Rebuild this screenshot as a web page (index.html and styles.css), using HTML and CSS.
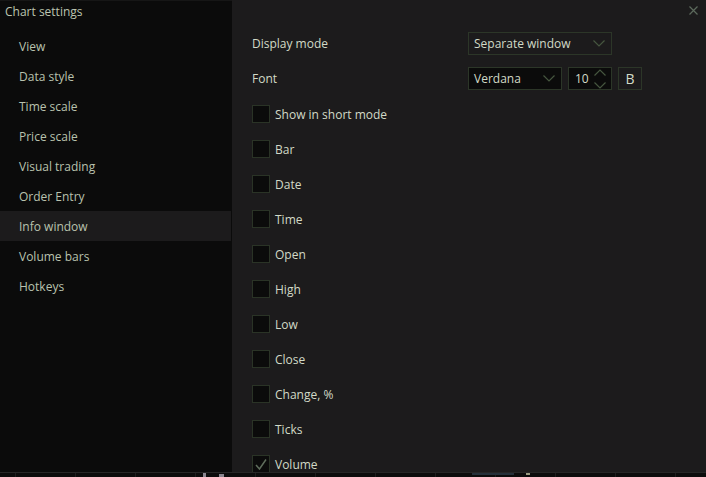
FILE: index.html
```html
<!DOCTYPE html>
<html>
<head>
<meta charset="utf-8">
<link rel="stylesheet" href="styles.css">
</head>
<body>
<div class="dialog">
  <aside class="sidebar">
    <div class="title">Chart settings</div>
    <ul class="nav">
      <li>View</li>
      <li>Data style</li>
      <li>Time scale</li>
      <li>Price scale</li>
      <li>Visual trading</li>
      <li>Order Entry</li>
      <li class="active">Info window</li>
      <li>Volume bars</li>
      <li>Hotkeys</li>
    </ul>
  </aside>
  <main class="panel">
    <button class="close" aria-label="Close">
      <svg width="9" height="9" viewBox="0 0 9 9"><path d="M0.5 0.5L8.5 8.5M8.5 0.5L0.5 8.5" stroke="#5c6a5c" stroke-width="1.2"/></svg>
    </button>
    <div class="field">
      <span class="label">Display mode</span>
      <div class="select wide">
        <span>Separate window</span>
        <svg class="chev" width="12" height="7" viewBox="0 0 12 7"><path d="M0.5 0.5L6 6L11.5 0.5" fill="none" stroke="#46563f" stroke-width="1.2"/></svg>
      </div>
    </div>
    <div class="field">
      <span class="label">Font</span>
      <div class="select dark font">
        <span>Verdana</span>
        <svg class="chev" width="12" height="7" viewBox="0 0 12 7"><path d="M0.5 0.5L6 6L11.5 0.5" fill="none" stroke="#46563f" stroke-width="1.2"/></svg>
      </div>
      <div class="spin">
        <span>10</span>
        <svg class="arrows" width="12" height="20" viewBox="0 0 12 20"><path d="M0.5 6.5L6 1L11.5 6.5M0.5 13.5L6 19L11.5 13.5" fill="none" stroke="#46563f" stroke-width="1.2"/></svg>
      </div>
      <div class="bold">B</div>
    </div>
    <ul class="checks">
      <li><span class="box"></span>Show in short mode</li>
      <li><span class="box"></span>Bar</li>
      <li><span class="box"></span>Date</li>
      <li><span class="box"></span>Time</li>
      <li><span class="box"></span>Open</li>
      <li><span class="box"></span>High</li>
      <li><span class="box"></span>Low</li>
      <li><span class="box"></span>Close</li>
      <li><span class="box"></span>Change, %</li>
      <li><span class="box"></span>Ticks</li>
      <li><span class="box checked"><svg width="12" height="11" viewBox="0 0 12 11"><path d="M1 6L4.5 10L11 0.5" fill="none" stroke="#5f6d5c" stroke-width="1.5"/></svg></span>Volume</li>
    </ul>
  </main>
</div>
<div class="chart-strip">
  <span class="grid"></span>
  <span class="bars"><i class="b1"></i><i class="b2"></i></span>
  <span class="blue"></span>
  <span class="mark"></span>
</div>
</body>
</html>
```
FILE: styles.css
```css
* { box-sizing: border-box; }
html, body { margin: 0; padding: 0; }
body {
  width: 706px;
  height: 477px;
  overflow: hidden;
  background: #0c0c0c;
  font-family: "Open Sans", "Noto Sans", sans-serif;
  font-size: 12px;
  display: flex;
  flex-direction: column;
}
.dialog {
  height: 472px;
  display: flex;
  overflow: hidden;
  flex: none;
}
.sidebar {
  width: 232px;
  flex: none;
  background: #0b0b0b;
  border-top: 1px solid #161616;
}
.title {
  height: 30px;
  padding: 2px 0 0 5px;
  color: #bcc5b0;
  font-size: 12px;
}
.nav {
  list-style: none;
  margin: 0;
  padding: 0;
}
.nav li {
  height: 30px;
  width: 231px;
  line-height: 31px;
  padding-left: 19px;
  color: #b9c2ae;
}
.nav li.active {
  background: #1c1b1c;
}
.panel {
  flex: 1;
  position: relative;
  background: #1c1b1c;
  padding: 31px 0 0 20px;
}
.close {
  position: absolute;
  top: 6px;
  right: 8px;
  width: 9px;
  height: 9px;
  padding: 0;
  border: 0;
  background: none;
  display: block;
}
.close svg { display: block; }
.field {
  display: flex;
  align-items: center;
  height: 23px;
  margin-bottom: 12px;
  color: #d2dac7;
}
.field:nth-child(2) { margin-top: 1px; }
.label {
  width: 216px;
  flex: none;
}
.select {
  height: 23px;
  border: 1px solid #2c3628;
  display: flex;
  align-items: center;
  justify-content: space-between;
  padding: 0 6px 0 5px;
  color: #d2dac7;
}
.select.wide { width: 144px; }
.select.font { width: 94px; background: #0b0b0b; }
.chev { display: block; }
.spin {
  width: 44px;
  height: 23px;
  margin-left: 6px;
  border: 1px solid #2c3628;
  background: #0b0b0b;
  display: flex;
  align-items: center;
  justify-content: space-between;
  padding: 0 5px 0 6px;
  color: #d2dac7;
}
.arrows { display: block; }
.bold {
  width: 24px;
  height: 23px;
  margin-left: 6px;
  border: 1px solid #2c3628;
  display: flex;
  align-items: center;
  justify-content: center;
  font-size: 14px;
  color: #d2dac7;
}
.checks {
  list-style: none;
  margin: 0;
  padding: 3px 0 0 0;
  display: flex;
  flex-direction: column;
  gap: 17px;
}
.checks li {
  display: flex;
  align-items: center;
  height: 18px;
  color: #d2dac7;
}
.box {
  width: 18px;
  height: 18px;
  margin-right: 5px;
  border: 1px solid #2a3326;
  background: #0b0b0b;
  display: flex;
  align-items: center;
  justify-content: center;
  flex: none;
}
.box svg { display: block; }
.chart-strip {
  position: relative;
  height: 5px;
  flex: none;
  border-top: 1px solid #262626;
  background: #0c0c0c;
}
.grid {
  position: absolute;
  inset: 0;
  background-image: repeating-linear-gradient(90deg, transparent 0 15px, #1e1e1e 15px 16px, transparent 16px 60px);
}
.bars { position: absolute; inset: 0; }
.bars i { position: absolute; bottom: 0; background: #8a8690; }
.bars .b1 { left: 203px; width: 3px; height: 4px; }
.bars .b2 { left: 219px; width: 5px; height: 3px; }
.blue {
  position: absolute;
  left: 472px;
  top: 0;
  width: 42px;
  height: 2px;
  background: #25303a;
}
.mark {
  position: absolute;
  left: 526px;
  top: 0;
  width: 4px;
  height: 2px;
  background: #9a9a80;
}
```
